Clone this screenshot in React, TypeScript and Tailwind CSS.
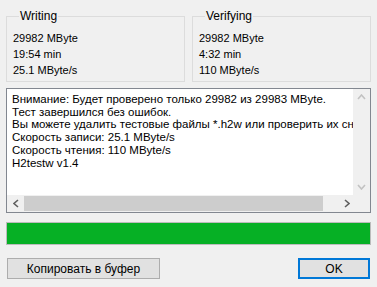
import React from "react";

const memoLines = [
  "Внимание: Будет проверено только 29982 из 29983 MByte.",
  "Тест завершился без ошибок.",
  "Вы можете удалить тестовые файлы *.h2w или проверить их снова позже.",
  "Скорость записи: 25.1 MByte/s",
  "Скорость чтения: 110 MByte/s",
  "H2testw v1.4",
];

function GroupBox({ title, lines }: { title: string; lines: string[] }) {
  return (
    <fieldset className="w-[179px] h-[73px] border border-[#dcdcdc] pl-[6px] pt-[6px]">
      <legend className="ml-[6px] px-[1px] text-[12px] leading-[15px] text-black">{title}</legend>
      {lines.map((l) => (
        <div key={l} className="text-[11px] leading-[16px] text-black whitespace-nowrap">
          {l}
        </div>
      ))}
    </fieldset>
  );
}

function Chevron({ dir, color }: { dir: "left" | "right" | "up" | "down"; color: string }) {
  const pts: Record<string, string> = {
    left: "5,1 1,4.5 5,8",
    right: "1,1 5,4.5 1,8",
    up: "1,5 4.5,1 8,5",
    down: "1,1 4.5,5 8,1",
  };
  const horiz = dir === "left" || dir === "right";
  return (
    <svg width={horiz ? 6 : 9} height={horiz ? 9 : 6} viewBox={horiz ? "0 0 6 9" : "0 0 9 6"}>
      <polyline points={pts[dir]} fill="none" stroke={color} strokeWidth="1.6" />
    </svg>
  );
}

export default function App() {
  return (
    <div
      className="w-[377px] h-[287px] bg-[#f0f0f0] overflow-hidden flex flex-col"
      style={{ fontFamily: '"Liberation Sans", Arial, sans-serif' }}
    >
      <div className="flex gap-[7px] pl-[6px] mt-[9px]">
        <GroupBox title="Writing" lines={["29982 MByte", "19:54 min", "25.1 MByte/s"]} />
        <GroupBox title="Verifying" lines={["29982 MByte", "4:32 min", "110 MByte/s"]} />
      </div>

      {/* memo */}
      <div className="ml-[6px] mt-[6px] w-[365px] h-[125px] border border-[#828790] flex flex-col bg-white">
        <div className="flex flex-1 min-h-0">
          <div className="flex-1 overflow-hidden pl-[5px] pt-[4px]">
            {memoLines.map((l) => (
              <div key={l} className="text-[11.5px] leading-[12.7px] text-black whitespace-nowrap">
                {l}
              </div>
            ))}
          </div>
          <div className="w-[17px] bg-[#f0f0f0] flex flex-col justify-between items-center py-[5px]">
            <Chevron dir="up" color="#c2c2c2" />
            <Chevron dir="down" color="#c2c2c2" />
          </div>
        </div>
        <div className="h-[17px] flex bg-[#f0f0f0]">
          <div className="w-[17px] flex items-center justify-center">
            <Chevron dir="left" color="#606060" />
          </div>
          <div className="flex-1 flex items-center pr-[13px]">
            <div className="h-[15px] w-full bg-[#cdcdcd]" />
          </div>
          <div className="w-[17px] flex items-center justify-center pl-[4px]">
            <Chevron dir="right" color="#606060" />
          </div>
          <div className="w-[17px] bg-[#f0f0f0]" />
        </div>
      </div>

      {/* progress */}
      <div className="ml-[6px] mt-[9px] w-[365px] h-[23px] border border-[#bcbcbc] bg-[#e6e6e6]">
        <div className="h-full w-full bg-[#06b025]" />
      </div>

      {/* buttons */}
      <div className="flex justify-between pl-[7px] pr-[7px] mt-[13px]">
        <button className="w-[153px] h-[21px] border border-[#adadad] bg-[#e1e1e1] text-[12px] text-black leading-none">
          Копировать в буфер
        </button>
        <button className="w-[72px] h-[21px] border-2 border-[#0078d7] bg-[#e1e1e1] text-[12px] text-black leading-none">
          OK
        </button>
      </div>
    </div>
  );
}
